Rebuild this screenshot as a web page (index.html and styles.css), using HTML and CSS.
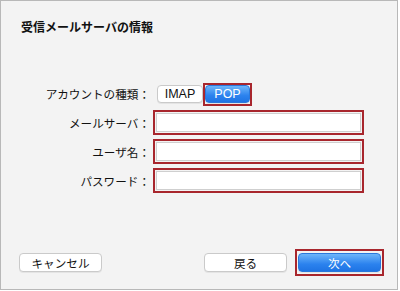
FILE: index.html
```html
<!DOCTYPE html>
<html lang="ja">
<head>
<meta charset="utf-8">
<link rel="stylesheet" href="styles.css">
</head>
<body>
<div class="dialog">
  <h1 class="title">受信メールサーバの情報</h1>
  <div class="form">
    <div class="label">アカウントの種類：</div>
    <div class="seg">
      <button class="btn seg-btn">IMAP</button>
      <span class="mark mark-seg"><button class="btn seg-btn blue">POP</button></span>
    </div>
    <div class="label">メールサーバ：</div>
    <input class="field" type="text">
    <div class="label">ユーザ名：</div>
    <input class="field" type="text">
    <div class="label">パスワード：</div>
    <input class="field" type="password">
  </div>
  <div class="footer">
    <button class="btn wide">キャンセル</button>
    <div class="right">
      <button class="btn wide">戻る</button>
      <span class="mark mark-next"><button class="btn wide blue">次へ</button></span>
    </div>
  </div>
</div>
</body>
</html>
```

FILE: styles.css
```css
html, body {
  margin: 0;
  background: #ffffff;
}
body {
  font-family: "Liberation Sans", "Noto Sans CJK JP", sans-serif;
  color: #111;
}
.dialog {
  box-sizing: border-box;
  width: 398px;
  height: 290px;
  border: 1px solid #b8b8b8;
  background: #f3f3f3;
  display: flex;
  flex-direction: column;
  padding-top: 18px;
}
.title {
  margin: 0;
  padding-left: 20px;
  font-size: 12px;
  line-height: 16px;
  font-weight: bold;
  font-family: "Noto Sans CJK JP", sans-serif;
}
.form {
  margin-top: 50px;
  display: grid;
  grid-template-columns: 149px 206px;
  column-gap: 6px;
  row-gap: 10px;
  grid-template-rows: 18px 19px 19px 19px;
  align-items: center;
}
.label {
  text-align: right;
  font-size: 11.6px;
  font-family: "Noto Sans CJK JP", sans-serif;
  line-height: 14px;
}
.seg {
  display: flex;
  align-items: flex-start;
  height: 18px;
  margin-left: 1px;
}
.btn {
  box-sizing: border-box;
  font-family: "Liberation Sans", "Noto Sans CJK JP", sans-serif;
  font-size: 11.5px;
  color: #111;
  background: #ffffff;
  border: 1px solid #cacaca;
  border-radius: 4px;
  box-shadow: 0 1px 0 rgba(0,0,0,0.06);
  padding: 0;
  margin: 0;
  height: 19px;
  line-height: 16px;
  display: block;
}
.seg-btn {
  width: 46px;
  height: 18px;
  font-size: 12.5px;
}
.blue {
  color: #fff;
  background: linear-gradient(#6db5fa, #2b82ee 60%, #1f74e4);
  border-color: #2a78dc;
}
.mark {
  display: block;
  border: 2px solid #a8262d;
}
.mark-seg {
  margin: -2px 0 0 0;
  padding: 0 0 1px 0;
}
.mark-seg .seg-btn {
  width: 45px;
}
.mark-next {
  padding: 2px 1px;
}
.field {
  box-sizing: border-box;
  width: 205px;
  height: 19px;
  margin: 0;
  background: #fff;
  border: 1px solid #cfcfcf;
  outline: 2px solid #a8262d;
  outline-offset: 1px;
  padding: 0 3px;
}
.footer {
  margin-top: auto;
  padding: 0 13px 13px 18px;
  display: flex;
  justify-content: space-between;
  align-items: center;
}
.right {
  display: flex;
  align-items: center;
  gap: 8px;
}
.wide {
  width: 83px;
  font-family: "Noto Sans CJK JP", sans-serif;
  font-size: 11.6px;
}
```
